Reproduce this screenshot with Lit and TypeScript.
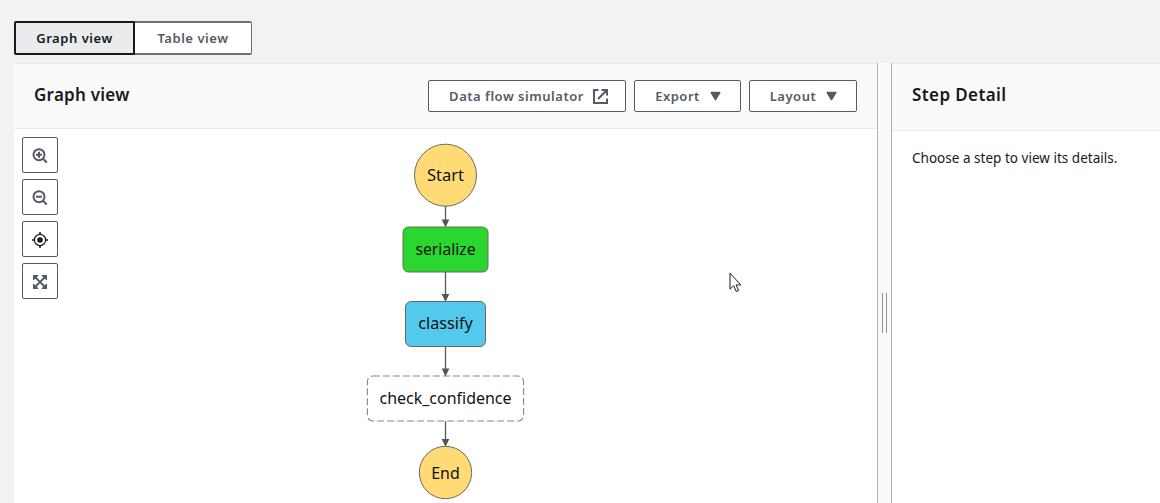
import { LitElement, html, svg, css } from "lit";
import { customElement, property } from "lit/decorators.js";

const icons = {
  zoomIn: svg`<g fill="none" stroke="#545b64" stroke-width="2"><circle cx="7" cy="6.7" r="5.5"/><path d="M11 10.7 14.8 14.5M7 3.7v6M4 6.7h6"/></g>`,
  zoomOut: svg`<g fill="none" stroke="#545b64" stroke-width="2"><circle cx="7" cy="6.7" r="5.5"/><path d="M11 10.7 14.8 14.5M4 6.7h6"/></g>`,
  center: svg`<g fill="none" stroke="#16191f" stroke-width="1.2"><circle cx="8" cy="8" r="5.6"/><path stroke-width="1.6" d="M8 0v3M8 13v3M0 8h3M13 8h3"/></g><circle cx="8" cy="8" r="2.8" fill="#16191f"/>`,
  fit: svg`<path fill="#545b64" d="M1 1h5.6L5 3.2 3.2 5 1 6.6zM15 1H9.4L11 3.2 12.8 5 15 6.6zM1 15h5.6L5 12.8 3.2 11 1 9.4zM15 15H9.4l1.6-2.2 1.8-1.8L15 9.4z"/><path fill="none" stroke="#545b64" stroke-width="1.8" d="M3 3l10 10M13 3 3 13"/>`,
};

@customElement("tool-button")
class ToolButton extends LitElement {
  @property() icon: keyof typeof icons = "zoomIn";
  static styles = css`
    button { display: flex; align-items: center; justify-content: center; box-sizing: border-box; width: 36px; height: 36px; padding: 0; background: #fff; border: 1px solid #545b64; border-radius: 2px; }
    svg { display: block; width: 16px; height: 16px; margin-top: 1px; }
  `;
  render() {
    return html`<button aria-label=${this.icon}><svg viewBox="0 0 16 16">${icons[this.icon]}</svg></button>`;
  }
}

@customElement("state-graph")
class StateGraph extends LitElement {
  static styles = css`
    :host { display: block; }
    svg { display: block; }
    .shape { stroke: #6b6b5c; stroke-width: 1; }
    .terminal { fill: #ffda75; }
    .done { fill: #2bd62e; }
    .running { fill: #53c9ed; }
    .pending { fill: #fff; stroke: #888; stroke-dasharray: 7 3; stroke-width: 1.1; }
    .edge { stroke: #545b5b; stroke-width: 1.3; }
    .arrow { fill: #545454; }
    text { font: 17px "Noto Sans", sans-serif; fill: #111; text-anchor: middle; }
  `;
  edge(y1: number, y2: number) {
    return svg`<path class="edge" d="M159.5 ${y1}V${y2 - 6}"/><path class="arrow" d="M155.7 ${y2 - 7.5}h7.6L159.5 ${y2 + 0.5}z"/>`;
  }
  label(y: number, text: string, width: number) {
    return svg`<text x="159.5" y=${y} textLength=${width} lengthAdjust="spacingAndGlyphs">${text}</text>`;
  }
  render() {
    return html`<svg width="320" height="374" viewBox="0 0 320 374">
      <circle class="shape terminal" cx="159.5" cy="46.2" r="31"/>
      <rect class="shape done" x="117" y="98" width="85" height="45" rx="5.5"/>
      <rect class="shape running" x="119.5" y="172.5" width="80" height="45" rx="5.5"/>
      <rect class="shape pending" x="81.4" y="247" width="156.2" height="45" rx="5.5"/>
      <circle class="shape terminal" cx="159.5" cy="343.5" r="26.2"/>
      ${this.edge(77, 98)}${this.edge(143, 172.5)}${this.edge(217.5, 247)}${this.edge(292, 317.5)}
      ${this.label(52, "Start", 37)}
      ${this.label(126, "serialize", 60)}
      ${this.label(200, "classify", 54.5)}
      ${this.label(275, "check_confidence", 132)}
      ${this.label(350, "End", 28.5)}
    </svg>`;
  }
}

@customElement("app-root")
class AppRoot extends LitElement {
  static styles = css`
    :host { display: flex; flex-direction: column; box-sizing: border-box; height: 503px; overflow: hidden; position: relative; padding: 21px 0 0 14px; background: #f2f2f2; font-family: "Noto Sans", sans-serif; color: #16191f; }
    button { font: 600 13px "Noto Sans", sans-serif; box-sizing: border-box; margin: 0; padding: 0; background: #fff; white-space: nowrap; }
    .tabs { display: flex; height: 34px; flex: none; }
    .tab { height: 34px; letter-spacing: 0.55px; }
    .active { width: 121px; border: 2px solid #16191f; border-radius: 2px 0 0 2px; background: #eaebed; color: #16191f; }
    .inactive { width: 117px; border: solid #687078; border-width: 2px 1px 2px 0; border-radius: 0 2px 2px 0; color: #545b64; }
    .panels { display: flex; flex: 1; min-height: 0; margin-top: 8px; }
    .main { width: 863px; background: #fff; display: flex; flex-direction: column; }
    .head { display: flex; align-items: center; box-sizing: border-box; background: #fafafa; border-top: 1px solid #eaeaea; border-bottom: 1px solid #e9ebeb; padding: 0 20px; flex: none; height: 66px; }
    h2 { margin: 0; font-size: 17px; line-height: 24px; font-weight: 600; letter-spacing: 0.25px; flex: 1; padding-bottom: 2px; white-space: nowrap; }
    .actions { display: flex; gap: 8px; }
    .btn { display: flex; align-items: center; justify-content: center; height: 32px; border: 1px solid #545b64; border-radius: 2px; color: #545b64; letter-spacing: 0.52px; }
    .wide { width: 198px; gap: 9px; padding-left: 3px; }
    .export { width: 107px; gap: 10px; padding-left: 1px; }
    .layout { width: 108px; gap: 10px; padding-left: 1px; }
    .btn svg { display: block; }
    .canvas { display: flex; padding: 0 8px; }
    .tools { display: flex; flex-direction: column; gap: 6px; padding-top: 8px; width: 264px; }
    .splitter { display: flex; justify-content: center; align-items: center; box-sizing: border-box; width: 15px; border: 1px solid #aab7b8; border-width: 0 1px; background: #fafafa; }
    .grip { box-sizing: border-box; width: 5px; height: 40px; margin-top: 60px; border: 1px solid #879596; border-width: 0 1px; }
    .detail { flex: 1; background: #fff; }
    .detail .head { height: 68px; }
    .detail h2 { padding-bottom: 4px; letter-spacing: 0.4px; }
    p { margin: 0; padding: 17px 20px; font-size: 13.5px; line-height: 20px; letter-spacing: 0.02px; white-space: nowrap; }
    .cursor { position: absolute; left: 729px; top: 272px; }
  `;
  render() {
    const caret = html`<svg width="11" height="10" viewBox="0 0 11 10"><path d="M1.3 1.5h8.4L5.5 8.5z" fill="#545b64" stroke="#545b64" stroke-width="1.6" stroke-linejoin="round"/></svg>`;
    return html`
      <div class="tabs"><button class="tab active"><span>Graph view</span></button><button class="tab inactive"><span>Table view</span></button></div>
      <div class="panels">
        <section class="main">
          <header class="head">
            <h2><span>Graph view</span></h2>
            <div class="actions">
              <button class="btn wide"><span>Data flow simulator</span><svg width="15" height="15" viewBox="0 0 15 15" fill="none" stroke="#545b64" stroke-width="2"><path d="M5.5 1H1v13h13V9.5M8.5 1H14v5.5M13.5 1.5 5 10"/></svg></button>
              <button class="btn export"><span>Export</span>${caret}</button>
              <button class="btn layout"><span>Layout</span>${caret}</button>
            </div>
          </header>
          <div class="canvas">
            <div class="tools">
              <tool-button icon="zoomIn"></tool-button><tool-button icon="zoomOut"></tool-button><tool-button icon="center"></tool-button><tool-button icon="fit"></tool-button>
            </div>
            <state-graph></state-graph>
          </div>
        </section>
        <div class="splitter"><div class="grip"></div></div>
        <section class="detail">
          <header class="head"><h2>Step Detail</h2></header>
          <p>Choose a step to view its details.</p>
        </section>
      </div>
      <svg class="cursor" width="13" height="21" viewBox="0 0 13 21"><path d="M1 1.2v16l3.7-3.5 2.5 5.8 2.4-1-2.5-5.6h4.8z" fill="#fff" stroke="#1b1b24" stroke-width="1"/></svg>
    `;
  }
}
